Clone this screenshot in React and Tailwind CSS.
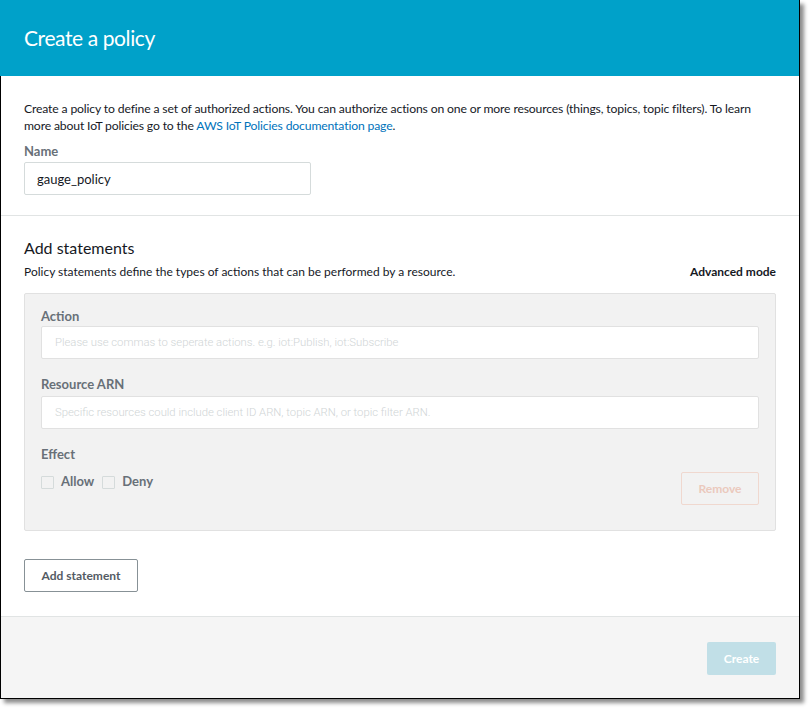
import React, { useState } from 'react';

const FONT = { fontFamily: 'Lato, "Open Sans", sans-serif' };
const LIGHT = { fontFamily: 'Roboto, sans-serif', fontWeight: 300 };

const Label = ({ children, className = '' }) => (
  <div className={`text-[13px] font-bold text-[#687078] leading-4 ${className}`}>{children}</div>
);

const Checkbox = ({ label }) => (
  <label className="flex items-center h-4">
    <span className="w-[13px] h-[13px] border border-[#d5dbdb] bg-[#f2f2f2] rounded-[1px]" />
    <span className="ml-[7px] text-[13px] font-bold text-[#687078]">{label}</span>
  </label>
);

const App = () => {
  const [name, setName] = useState('gauge_policy');

  return (
    <div className="w-[810px] h-[709px] bg-white" style={FONT}>
      <div className="w-[800px] h-[699px] flex flex-col border-r border-b border-black shadow-[4px_4px_4px_rgba(0,0,0,0.45)] bg-white">
        {/* Header */}
        <div className="h-[76px] bg-[#00a1c9] flex items-center pl-6 shrink-0">
          <h1 className="text-[21px] tracking-[-0.4px] text-white leading-none -mt-[2px]">Create a policy</h1>
        </div>

        <div className="flex-1 flex flex-col border-l border-black">
          {/* Intro */}
          <div className="px-[23px] pt-[24px] pb-[20px] border-b border-[#e1e4e4]">
            <p className="text-[12.2px] tracking-[-0.15px] leading-[17px] text-[#16191f]">
              Create a policy to define a set of authorized actions. You can authorize actions on one or more resources (things, topics, topic filters). To learn
              <br />
              more about IoT policies go to the{' '}
              <a href="#" className="text-[#0073bb]">AWS IoT Policies documentation page</a>.
            </p>
            <Label className="mt-[9px] text-[#545b64]">Name</Label>
            <input
              value={name}
              onChange={(e) => setName(e.target.value)}
              className="mt-[3px] w-[287px] h-[33px] border border-[#d5dbdb] rounded-[2px] px-[12px] text-[13px] text-[#16191f] outline-none"
            />
          </div>

          {/* Statements */}
          <div className="px-[23px] pt-[22px] pb-[24px] border-b border-[#e1e4e4]">
            <h2 className="text-[16px] leading-5 text-[#16191f]">Add statements</h2>
            <div className="mt-[6px] h-4 flex items-center justify-between">
              <p className="text-[12px] text-[#16191f]">Policy statements define the types of actions that can be performed by a resource.</p>
              <span className="text-[12px] font-bold text-[#16191f]">Advanced mode</span>
            </div>

            <div className="mt-[13px] bg-[#f2f2f2] border border-[#e1e1e1] rounded-[2px] px-[16px] pt-[14px] pb-[25px]">
              <Label>Action</Label>
              <input
                placeholder="Please use commas to seperate actions. e.g. iot:Publish, iot:Subscribe"
                className="mt-[2px] w-full h-[33px] bg-white border border-[#e1e1e1] rounded-[2px] px-[13px] text-[11.3px] placeholder:text-[#d0d5d6] outline-none"
                style={LIGHT}
              />
              <Label className="mt-[17px]">Resource ARN</Label>
              <input
                placeholder="Specific resources could include client ID ARN, topic ARN, or topic filter ARN."
                className="mt-[4px] w-full h-[33px] bg-white border border-[#e1e1e1] rounded-[2px] px-[13px] text-[11.3px] placeholder:text-[#d0d5d6] outline-none"
                style={LIGHT}
              />
              <Label className="mt-[17px]">Effect</Label>
              <div className="flex items-start justify-between">
                <div className="flex items-center gap-[8px] mt-[12px]">
                  <Checkbox label="Allow" />
                  <Checkbox label="Deny" />
                </div>
                <button className="mt-[10px] w-[78px] h-[33px] border border-[#f0d8cf] rounded-[2px] text-[12px] font-bold text-[#ebc9bd]">
                  Remove
                </button>
              </div>
            </div>

            <button className="mt-[28px] w-[114px] h-[33px] border border-[#879196] rounded-[2px] text-[12px] font-bold text-[#545b64]">
              Add statement
            </button>
          </div>

          {/* Footer */}
          <div className="flex-1 bg-[#f5f5f5] flex justify-end items-start px-[23px] pt-[25px]">
            <button className="w-[69px] h-[33px] bg-[#c1dfe7] rounded-[2px] text-[12px] font-bold text-white">
              Create
            </button>
          </div>
        </div>
      </div>
    </div>
  );
};

export default App;
